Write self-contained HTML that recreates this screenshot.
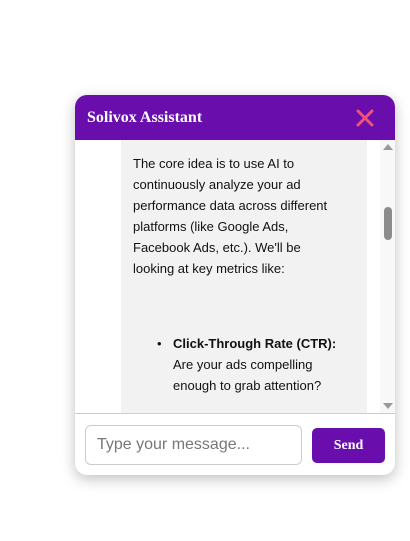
<!DOCTYPE html>
<html><head><style>
body{margin:0;width:410px;height:541px;background:#fff;position:relative;overflow:hidden;font-family:"Liberation Sans",sans-serif}
.win{position:absolute;left:75px;top:95px;width:320px;height:380px;border-radius:12px;background:#fff;box-shadow:0 4px 14px rgba(0,0,0,.25);overflow:hidden}
.hd{height:45px;background:#6a0dad;color:#fff;font-family:"Liberation Serif",serif;font-weight:bold;font-size:16px;line-height:45px;padding-left:12px;position:relative}
.x{position:absolute;right:20px;top:13px;width:20px;height:20px}
.msgs{position:absolute;top:45px;left:0;width:320px;height:273px;overflow:hidden}
.bub{position:absolute;left:46px;top:0;width:246px;height:273px;background:#f2f2f2;color:#111;font-size:13px;line-height:21px;padding:13px 0 0 12px;box-sizing:border-box}
.sb{position:absolute;right:0;top:0;width:15px;height:273px;background:#f8f8f8}
.thumb{position:absolute;left:4px;top:67px;width:8px;height:33px;border-radius:4px;background:#8c8c8c}
.up,.dn{position:absolute;left:3px;width:0;height:0;border-left:5px solid transparent;border-right:5px solid transparent}
.up{top:4px;border-bottom:6px solid #999}.dn{bottom:4px;border-top:6px solid #999}
.ft{position:absolute;top:318px;left:0;width:320px;height:62px;border-top:1px solid #ccc;box-sizing:border-box}
.in{position:absolute;left:10px;top:11px;width:217px;height:40px;border:1px solid #ccc;border-radius:6px;box-sizing:border-box;font-size:16px;color:#777;line-height:38px;padding-left:11px}
.btn{position:absolute;left:237px;top:14px;width:73px;height:35px;background:#6a0dad;border-radius:5px;color:#fff;font-family:"Liberation Serif",serif;font-weight:bold;font-size:14px;text-align:center;line-height:35px}
</style></head><body>
<div class="win">
<div class="hd">Solivox Assistant
<svg class="x" viewBox="0 0 20 20"><path d="M3 3L17 17M17 3L3 17" stroke="#f0527a" stroke-width="3" stroke-linecap="round"/></svg></div>
<div class="msgs">
<div class="bub">The core idea is to use AI to<br>continuously analyze your ad<br>performance data across different<br>platforms (like Google Ads,<br>Facebook Ads, etc.). We'll be<br>looking at key metrics like:
<div style="position:relative;margin-top:54px;padding-left:40px"><span style="position:absolute;left:24px;top:0">•</span><b>Click-Through Rate (CTR):</b><br>Are your ads compelling<br>enough to grab attention?</div>
</div>
<div class="sb"><div class="up"></div><div class="thumb"></div><div class="dn"></div></div>
</div>
<div class="ft"><div class="in">Type your message...</div><div class="btn">Send</div></div>
</div>
</body></html>
